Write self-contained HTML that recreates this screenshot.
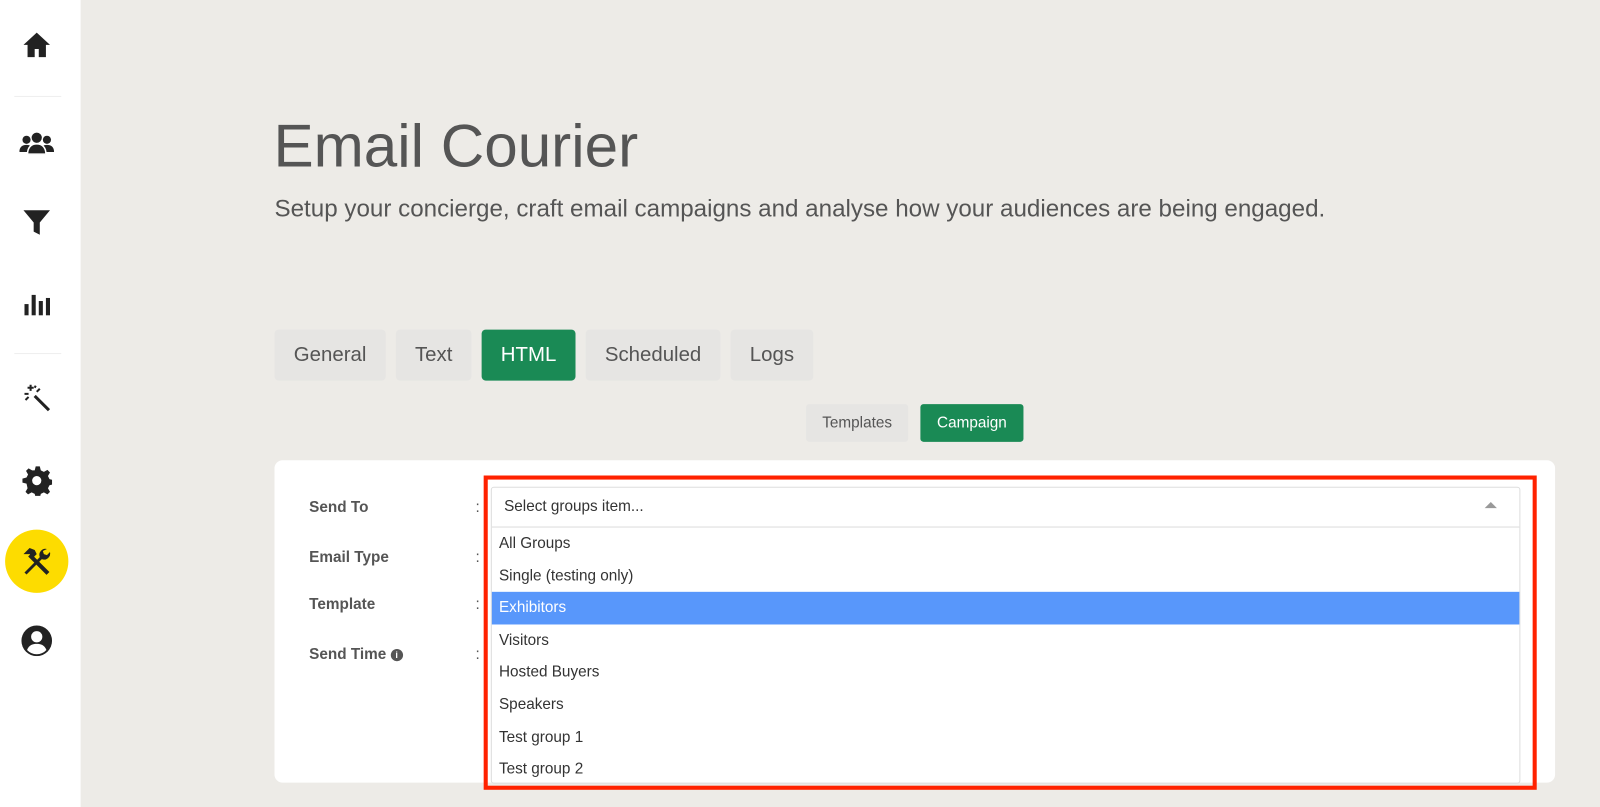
<!DOCTYPE html>
<html><head><meta charset="utf-8"><style>
*{margin:0;padding:0;box-sizing:border-box}
body{width:1600px;height:807px;background:#edebe7;font-family:"Liberation Sans",sans-serif;position:relative;overflow:hidden}
.wrap{position:absolute;left:0;top:0;width:1568px;height:791px;transform:scale(1.0204);transform-origin:0 0}
.side{position:absolute;left:0;top:0;width:79px;height:791px;background:#fff}
.ic{position:absolute;left:36px;transform:translate(-50%,-50%)}
.sep{position:absolute;left:14px;width:46px;height:1px;background:#eee}
h1{position:absolute;left:268px;top:109px;font-size:59px;font-weight:400;color:#555}
.sub{position:absolute;left:269px;top:192px;font-size:23.7px;color:#555}
.tab{position:absolute;top:323px;height:50px;background:#e6e5e3;border-radius:4px;font-size:20px;color:#555;display:flex;align-items:center;justify-content:center}
.tab.on{background:#1a8a55;color:#fff}
.st{position:absolute;top:396px;height:37px;background:#e6e5e3;border-radius:3px;font-size:15px;color:#555;display:flex;align-items:center;justify-content:center}
.st.on{background:#1a8a55;color:#fff}
.card{position:absolute;left:269px;top:451px;width:1255px;height:316px;background:#fff;border-radius:8px}
.lab{position:absolute;left:303px;font-size:15px;font-weight:bold;color:#555}
.col{position:absolute;left:466px;font-size:15px;color:#555}
.red{position:absolute;left:474px;top:466px;width:1032px;height:308px;border:4px solid #ff2200}
.sel{position:absolute;left:481px;top:477px;width:1009px;height:291px;border:1px solid #ddd;border-radius:3px;background:#fff}
.hd{height:39px;border-bottom:1px solid #ddd;padding-left:12px;line-height:37px;font-size:15px;color:#333;position:relative}
.it{height:31.6px;line-height:31.6px;padding-left:7px;font-size:15px;color:#333}
.it.h{background:#5897fb;color:#fff}
</style></head><body><div class="wrap">
<div class="side">
<svg class="ic" style="top:44px" width="28" height="28" viewBox="0 0 28 28"><path d="M14 2L1 14h4v12h7v-8h4v8h7V14h4z" fill="#222"/></svg>
<div class="sep" style="top:94px"></div>
<svg class="ic" style="top:140px" width="34" height="22" viewBox="0 0 34 22"><circle cx="7" cy="8" r="4" fill="#222"/><circle cx="27" cy="8" r="4" fill="#222"/><circle cx="17" cy="6" r="5" fill="#222"/><path d="M0 20c0-5 3-7 7-7s6 2 6 7z M21 20c0-5 2-7 6-7s7 2 7 7z" fill="#222"/><path d="M8 22c0-7 4-10 9-10s9 3 9 10z" fill="#222" stroke="#fff" stroke-width="1.5"/></svg>
<svg class="ic" style="top:218px" width="28" height="28" viewBox="0 0 28 28"><path d="M1 2h26L17 14v12l-6-3V14z" fill="#222"/></svg>
<svg class="ic" style="top:297px" width="26" height="26" viewBox="0 0 26 26"><rect x="1" y="14" width="4" height="11" fill="#222"/><rect x="8" y="5" width="4" height="20" fill="#222"/><rect x="15" y="11" width="4" height="14" fill="#222"/><rect x="22" y="8" width="4" height="17" fill="#222"/></svg>
<div class="sep" style="top:346px"></div>
<svg class="ic" style="top:390px" width="28" height="28" viewBox="0 0 28 28"><path d="M12 12l14 14" stroke="#222" stroke-width="3"/><path d="M8 1v6M5 4h6M2 10h4M14 8l3-3M3 16l3-3M13 2l-1 2" stroke="#222" stroke-width="2"/></svg>
<svg class="ic" style="top:471px" width="30" height="30" viewBox="0 0 30 30"><path d="M15 1l3 0 1 4 3 1.5 3.5-2 2.5 2.5-2 3.5 1.5 3 4 1v4l-4 1-1.5 3 2 3.5-2.5 2.5-3.5-2-3 1.5-1 4h-4l-1-4-3-1.5-3.5 2-2.5-2.5 2-3.5L5 18l-4-1v-4l4-1 1.5-3-2-3.5 2.5-2.5 3.5 2L13 5l1-4z" fill="#222"/><circle cx="15" cy="15" r="4.5" fill="#fff"/></svg>
<div style="position:absolute;left:5px;top:519px;width:62px;height:62px;border-radius:50%;background:#fddc00"></div>
<svg class="ic" style="top:550px" width="32" height="32" viewBox="0 0 32 32"><path d="M3 9l6-6 5 2 2 4-3 3-4-3z" fill="#222"/><path d="M9 10l18 18" stroke="#222" stroke-width="4"/><path d="M26 4a6 6 0 0 0-7 8L4 27l2 2 15-15a6 6 0 0 0 8-7l-3 3-3-1-1-3z" fill="#222"/></svg>
<svg class="ic" style="top:628px" width="30" height="30" viewBox="0 0 30 30"><circle cx="15" cy="15" r="15" fill="#222"/><circle cx="15" cy="11" r="5.5" fill="#fff"/><path d="M5.5 24c2-5 5.5-6 9.5-6s7.5 1 9.5 6a13 13 0 0 1-19 0z" fill="#fff"/></svg>
</div>
<h1>Email Courier</h1>
<div class="sub">Setup your concierge, craft email campaigns and analyse how your audiences are being engaged.</div>
<div class="tab" style="left:269px;width:109px">General</div>
<div class="tab" style="left:388px;width:74px">Text</div>
<div class="tab on" style="left:472px;width:92px">HTML</div>
<div class="tab" style="left:574px;width:132px">Scheduled</div>
<div class="tab" style="left:716px;width:81px">Logs</div>
<div class="st" style="left:790px;width:100px">Templates</div>
<div class="st on" style="left:902px;width:101px">Campaign</div>
<div class="card"></div>
<div class="lab" style="top:489px">Send To</div>
<div class="lab" style="top:538px">Email Type</div>
<div class="lab" style="top:584px">Template</div>
<div class="lab" style="top:633px">Send Time <span style="display:inline-block;width:12px;height:12px;border-radius:50%;background:#555;color:#fff;font-size:9px;text-align:center;line-height:12px;vertical-align:1px">i</span></div>
<div class="col" style="top:489px">:</div>
<div class="col" style="top:538px">:</div>
<div class="col" style="top:584px">:</div>
<div class="col" style="top:633px">:</div>
<div class="red"></div>
<div class="sel">
<div class="hd">Select groups item...<span style="position:absolute;right:22px;top:14px;width:0;height:0;border-left:6px solid transparent;border-right:6px solid transparent;border-bottom:6px solid #999"></span></div>
<div class="it">All Groups</div>
<div class="it">Single (testing only)</div>
<div class="it h">Exhibitors</div>
<div class="it">Visitors</div>
<div class="it">Hosted Buyers</div>
<div class="it">Speakers</div>
<div class="it">Test group 1</div>
<div class="it">Test group 2</div>
</div>
</div></body></html>
